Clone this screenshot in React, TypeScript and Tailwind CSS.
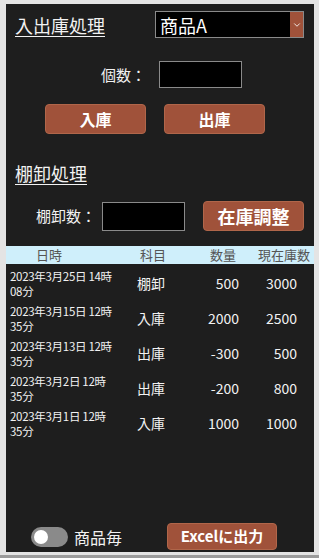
import React, { useState } from "react";
import { ChevronDown } from "lucide-react";

const font = { fontFamily: '"Noto Sans CJK JP", "Noto Sans", sans-serif' };

const rows = [
  { d1: "2023年3月25日 14時", d2: "08分", kind: "棚卸", qty: "500", stock: "3000" },
  { d1: "2023年3月15日 12時", d2: "35分", kind: "入庫", qty: "2000", stock: "2500" },
  { d1: "2023年3月13日 12時", d2: "35分", kind: "出庫", qty: "-300", stock: "500" },
  { d1: "2023年3月2日 12時", d2: "35分", kind: "出庫", qty: "-200", stock: "800" },
  { d1: "2023年3月1日 12時", d2: "35分", kind: "入庫", qty: "1000", stock: "1000" },
];

const BrownButton = ({ children, className = "" }: any) => (
  <button
    className={
      "flex items-center justify-center rounded-[4px] border border-[#b0664a] bg-[#a0523a] font-bold text-white " +
      className
    }
  >
    {children}
  </button>
);

export default function App() {
  const [perItem, setPerItem] = useState(false);

  return (
    <div
      className="flex h-[558px] w-[319px] flex-col border-b-[3px] border-[#9c9c9c] bg-[#e4e4e4] pt-[4px] pb-[3px] pl-[6px] pr-[5px]"
      style={font}
    >
      <div className="flex flex-1 flex-col bg-[#1e1e1e] pt-[7px] text-[#f2f2f2]">
        {/* 入出庫処理 */}
        <div className="flex items-center pl-[9px]">
          <div className="w-[140px] text-[18px] leading-[24px] underline underline-offset-[3px]">入出庫処理</div>
          <div className="flex h-[27px] w-[149px] items-center border border-[#8a8a8a] bg-black">
            <span className="flex-1 pl-[4px] text-[18px] leading-[24px] text-white">商品A</span>
            <div className="flex h-full w-[13px] items-center justify-center bg-[#a0523a]">
              <ChevronDown className="h-[10px] w-[10px] text-white" strokeWidth={2} />
            </div>
          </div>
        </div>

        <div className="mt-[23px] flex items-center pl-[95px]">
          <span className="text-[15px] leading-[20px]">個数：</span>
          <div className="ml-[13px] h-[27px] w-[83px] border border-[#8a8a8a] bg-black" />
        </div>

        <div className="mt-[16px] flex gap-[18px] pl-[39px]">
          <BrownButton className="h-[30px] w-[101px] text-[16px]">入庫</BrownButton>
          <BrownButton className="h-[30px] w-[101px] text-[16px]">出庫</BrownButton>
        </div>

        {/* 棚卸処理 */}
        <div className="mt-[27px] pl-[9px] text-[18px] leading-[24px] underline underline-offset-[3px]">棚卸処理</div>

        <div className="mt-[16px] flex items-center pl-[30px]">
          <span className="text-[15px] leading-[20px]">棚卸数：</span>
          <div className="ml-[6px] h-[29px] w-[83px] border border-[#8a8a8a] bg-black" />
          <BrownButton className="ml-[18px] h-[30px] w-[101px] text-[18px]">在庫調整</BrownButton>
        </div>

        {/* 履歴 */}
        <div className="mt-[15px] flex h-[18px] items-center bg-[#cfeffb] text-[13px] leading-[18px] text-[#555]">
          <span className="w-[134px] pl-[30px]">日時</span>
          <span className="w-[70px]">科目</span>
          <span className="w-[48px]">数量</span>
          <span>現在庫数</span>
        </div>

        <div className="pt-[2px]">
          {rows.map((r, i) => (
            <div key={i} className="flex h-[35px] items-center">
              <div className="w-[124px] pl-[4px] text-[11.5px] leading-[15px] tracking-[-0.3px]">
                <div>{r.d1}</div>
                <div>{r.d2}</div>
              </div>
              <div className="w-[60px] pl-[7px] text-[14px]">{r.kind}</div>
              <div className="w-[49px] text-right text-[14px]">{r.qty}</div>
              <div className="w-[58px] text-right text-[14px]">{r.stock}</div>
            </div>
          ))}
        </div>

        {/* 下部 */}
        <div className="mt-auto flex items-center pb-[2px] pl-[25px]">
          <button
            onClick={() => setPerItem(!perItem)}
            className={
              "flex h-[20px] w-[37px] items-center rounded-full px-[3px] " +
              (perItem ? "justify-end bg-[#a0523a]" : "justify-start bg-[#8a8a8a]")
            }
          >
            <span className="h-[14px] w-[14px] rounded-full bg-white" />
          </button>
          <span className="ml-[6px] text-[16px] leading-[22px]">商品毎</span>
          <BrownButton className="ml-[45px] h-[27px] w-[110px] text-[15px]">Excelに出力</BrownButton>
        </div>
      </div>
    </div>
  );
}
